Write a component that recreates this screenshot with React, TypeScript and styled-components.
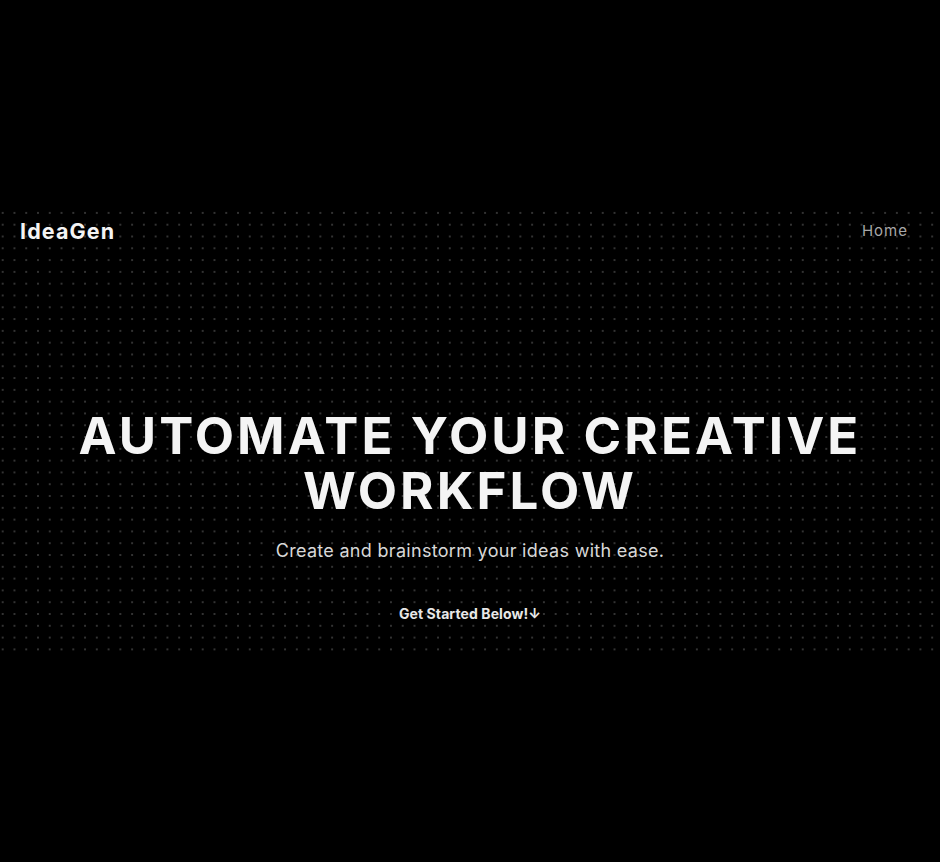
import React from "react";
import styled, { createGlobalStyle } from "styled-components";

const Global = createGlobalStyle`
  html, body {
    margin: 0;
    padding: 0;
    background: #000;
  }
  body {
    font-family: Inter, "Noto Sans", sans-serif;
    color: #f2f2f2;
  }
`;

const Page = styled.div`
  min-height: 862px;
  display: flex;
  flex-direction: column;
  justify-content: center;
  background: #000;
`;

const Hero = styled.section`
  height: 449px;
  display: flex;
  flex-direction: column;
  background-color: #000;
  background-image: radial-gradient(circle, rgba(255, 255, 255, 0.2) 0.8px, transparent 1.2px);
  background-size: 11.78px 11.8px;
  background-position: -3.2px 0px;
`;

const Nav = styled.nav`
  height: 48px;
  display: flex;
  align-items: center;
  justify-content: space-between;
  padding: 0 32px 0 20px;
`;

const Logo = styled.div`
  font-size: 21.5px;
  font-weight: 700;
  color: #f4f4f4;
  letter-spacing: 1.1px;
`;

const NavLink = styled.a`
  font-size: 15px;
  color: #a8a8a8;
  text-decoration: none;
  letter-spacing: 1px;
`;

const Content = styled.div`
  display: flex;
  flex-direction: column;
  align-items: center;
  text-align: center;
  padding-top: 153px;
`;

const Title = styled.h1`
  margin: 0;
  font-size: 51px;
  line-height: 55px;
  font-weight: 700;
  color: #f4f4f4;
  letter-spacing: 3.1px;
`;

const Subtitle = styled.p`
  margin: 19px 0 0;
  font-size: 18px;
  line-height: 27px;
  color: #d8d8d8;
  letter-spacing: 0.3px;
`;

const Cta = styled.a`
  margin-top: 40px;
  font-size: 14px;
  line-height: 20px;
  font-weight: 700;
  color: #e8e8e8;
  text-decoration: none;
  letter-spacing: 0.1px;
`;

export default function App() {
  return (
    <>
      <Global />
      <Page>
        <Hero>
          <Nav>
            <Logo>IdeaGen</Logo>
            <NavLink href="#">Home</NavLink>
          </Nav>
          <Content>
            <Title>
              AUTOMATE YOUR CREATIVE
              <br />
              WORKFLOW
            </Title>
            <Subtitle>Create and brainstorm your ideas with ease.</Subtitle>
            <Cta href="#">Get Started Below!↓</Cta>
          </Content>
        </Hero>
      </Page>
    </>
  );
}
